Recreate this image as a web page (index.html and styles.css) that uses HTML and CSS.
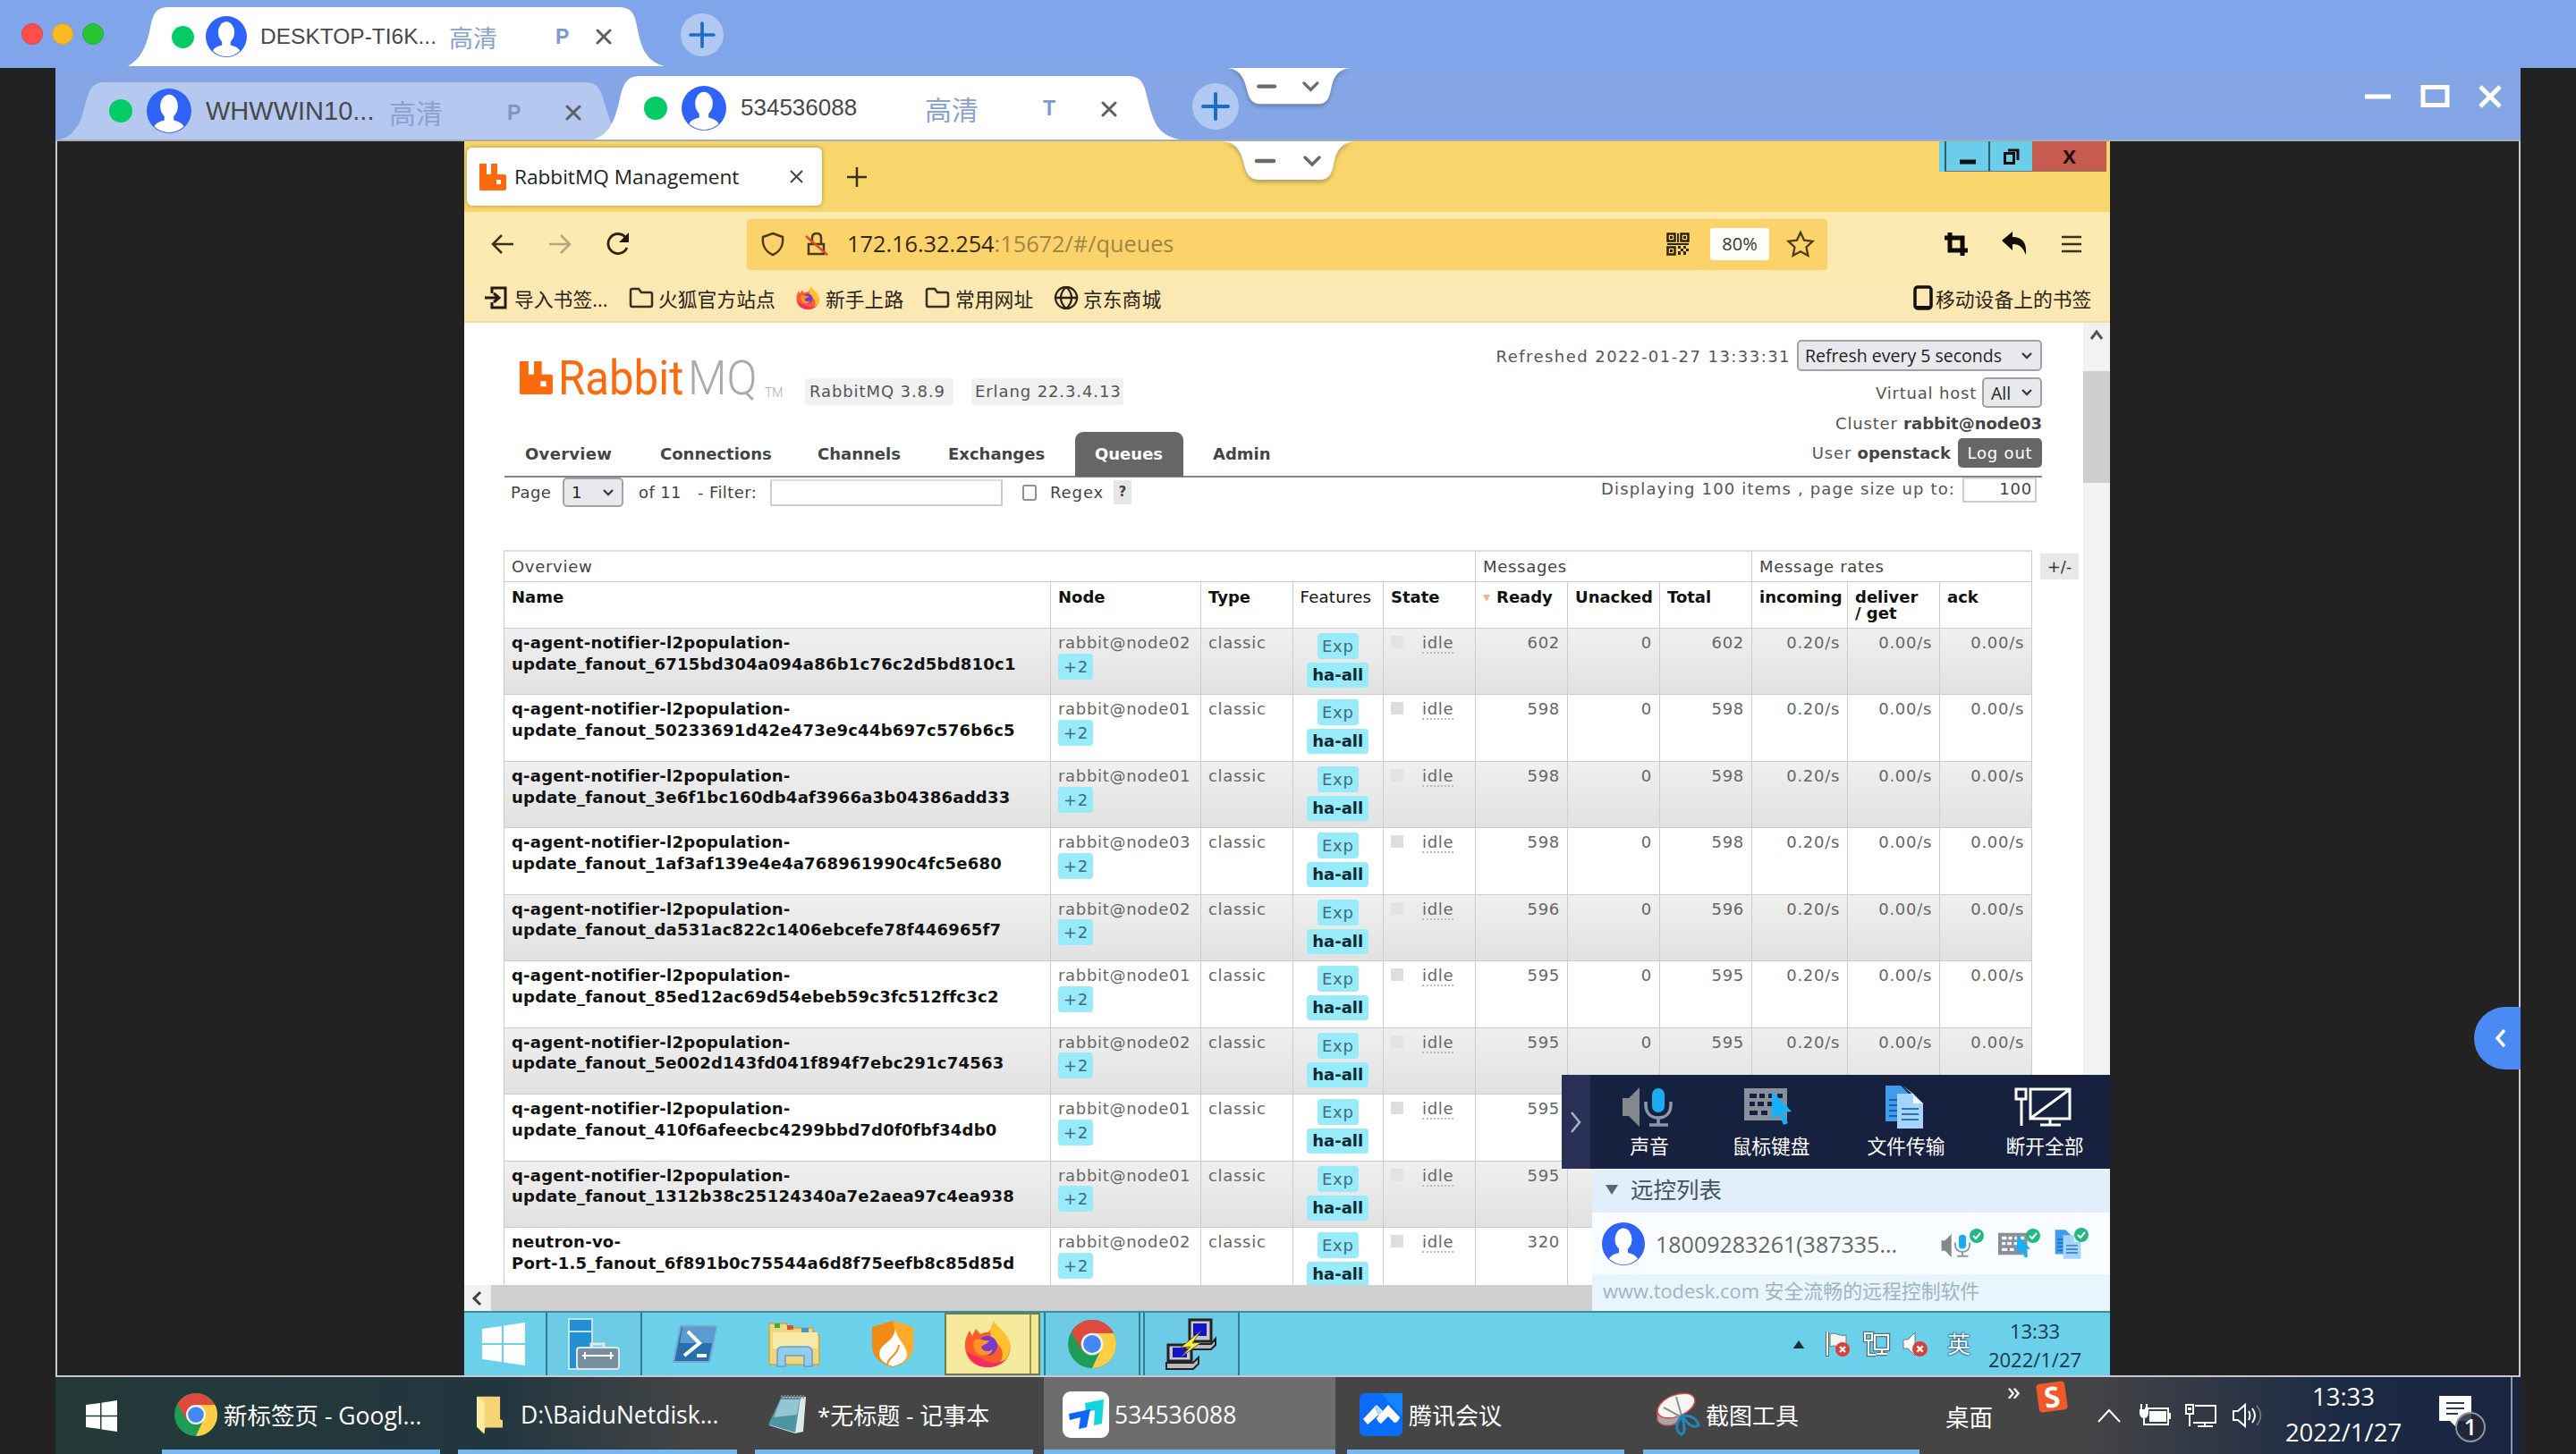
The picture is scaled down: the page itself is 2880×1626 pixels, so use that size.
FILE: index.html
```html
<!DOCTYPE html>
<html lang="zh-CN">
<head>
<meta charset="utf-8">
<title>ToDesk - RabbitMQ Management</title>
<link rel="stylesheet" href="styles.css">
</head>
<body>
<svg class="sprite" aria-hidden="true">
  <symbol id="avatar" viewBox="0 0 48 48"><circle cx="24" cy="24" r="24" fill="#2f62f6"/><ellipse cx="24" cy="19" rx="9.500" ry="12.500" fill="#fff"/><path d="M19 27h10v7c5 1 9 3 11 6.500A22.500 22.500 0 0 1 8 40.500c2-3.500 6-5.500 11-6.500z" fill="#fff"/></symbol>
  <symbol id="cross" viewBox="0 0 18 18"><path d="M2 2l14 14M16 2L2 16" stroke="#5b6068" stroke-width="3" stroke-linecap="round"/></symbol>
  <symbol id="plus" viewBox="0 0 52 52"><circle cx="26" cy="26" r="26" fill="#b1c8f2"/><path d="M12 26h28M26 12v28" stroke="#1a6dc6" stroke-width="4" stroke-linecap="round"/></symbol>
  <symbol id="notch" viewBox="0 0 146 48"><path d="M0 0C16 2 20 14 23 26C26 38 30 43 40 43H108C118 43 121 36 123 26C126 12 130 2 146 0z" fill="#fff"/><path d="M37 22h19" stroke="#6a6a6a" stroke-width="4.500" stroke-linecap="round"/><path d="M91 18l8 8 8-8" fill="none" stroke="#6a6a6a" stroke-width="3.500" stroke-linecap="round"/></symbol>
  <symbol id="rabbit" viewBox="0 0 30 30"><path d="M1 0h7v12h5V0h7v12h8q2 0 2 2v14q0 2-2 2H1q-1 0-1-2V1q0-1 1-1zM19 18v5h5v-5z" fill="#fb6a0c" fill-rule="evenodd"/></symbol>
  <symbol id="caret" viewBox="0 0 14 10"><path d="M2 2l5 5 5-5" fill="none" stroke="#3c3c3c" stroke-width="2.400"/></symbol>
  <symbol id="folder" viewBox="0 0 28 28"><path d="M2 22V6q0-2 2-2h7l3 4h10q2 0 2 2v12q0 2-2 2H4q-2 0-2-2z" fill="none" stroke="#35301f" stroke-width="2.500"/></symbol>
  <symbol id="firefox" viewBox="0 0 56 56"><path d="M28 54C12 54 2 43 3 28c0-6 3-11 5-15l3 6 4-8 5 6c4-2 7-2 9-2l6-9c6 4 4 6 9 10 7 5 11 12 9 20-2 11-12 18-25 18z" fill="#ff5a2c"/><path d="M35 2c4 8 16 13 18 25 2 13-7 22-14 25 6-6 8-14 3-21-4-7-11-8-11-16 0-5 2-9 4-13z" fill="#ffc12e"/><path d="M5 36c3 12 13 18 24 18 9 0 16-4 20-9-8 5-18 5-26 0C16 41 8 40 5 36z" fill="#f52c62"/><circle cx="28" cy="30" r="11" fill="#7a39c8"/><path d="M13 24c6-4 10 1 17 0-2 5-8 4-9 8 2 5 9 5 13 2-3 9-16 9-20 1-2-4-2-8-1-11z" fill="#ff9326"/></symbol>
  <symbol id="chrome" viewBox="0 0 48 48"><circle cx="24" cy="24" r="24" fill="#1f9d57"/><path d="M24 13H45.300A24 24 0 0 1 24 48L33 29z" fill="#ffcd46"/><path d="M3.200 12L14 30l10-17h21.300A24 24 0 0 0 3.200 12z" fill="#dd4b3e"/><circle cx="24" cy="24" r="11" fill="#f4f4f4"/><circle cx="24" cy="24" r="8.800" fill="#4688f1"/></symbol>
  <symbol id="windows" viewBox="0 0 48 48"><path d="M0 7l22-3v19H0zM24 3.600L48 0v23H24zM0 25h22v19L0 41zM24 25h24v23l-24-3.600z" fill="#fff"/></symbol>
  <symbol id="voice" viewBox="0 0 58 50"><path d="M1 15h7L20 3v44L8 35H1z" fill="#84888c"/><rect x="34" y="4" width="14" height="27" rx="7" fill="#1cabf0"/><path d="M27 19v3c0 9 5 15 14 15s14-6 14-15v-3M41 37v8M31 45h21" fill="none" stroke="#8b99a8" stroke-width="3.500"/></symbol>
  <symbol id="keys" viewBox="0 0 56 46"><path d="M0 2h48v36H0z" fill="#8a9099"/><path d="M6 8h8v5H6zm11 0h6v5h-6zm10 0h5v5h-5zm10 0h6v5h-6zM6 17h6v5H6zm9 0h7v5h-7zm11 0h6v5h-6zM6 27h9v5H6zm13 0h7v5h-7z" fill="var(--key,#16203f)"/><path d="M31 5l22 23-9 1 5 12-5 2-5-12-8 6z" fill="#16b1fb"/></symbol>
  <symbol id="files" viewBox="0 0 44 50"><path d="M1 1h17l9 9v31H1z" fill="#3e9bee"/><path d="M5 17h16M5 23h16M5 29h16M5 35h16" stroke="#195fa8" stroke-width="1.800"/><path d="M14 10h18l11 11v28H14z" fill="#a5d5fc"/><path d="M20 1l12 9v11h11z" fill="#fff" opacity=".9"/><path d="M19 27h19M19 33h19M19 39h19" stroke="#2574bd" stroke-width="2"/></symbol>
  <symbol id="ok" viewBox="0 0 16 16"><circle cx="8" cy="8" r="8" fill="#22b980"/><path d="M4 8l3 3 5-6" stroke="#fff" stroke-width="2" fill="none"/></symbol>
  <symbol id="error" viewBox="0 0 16 16"><circle cx="8" cy="8" r="8" fill="#d8403a"/><path d="M5 5l6 6M11 5l-6 6" stroke="#fff" stroke-width="2.200"/></symbol>
</svg>

<header class="topbar">
  <i class="light red"></i><i class="light yellow"></i><i class="light green"></i>
  <div class="tab tab-outer">
    <svg class="tab-shape" viewBox="0 0 600 66"><path d="M0 66C14 58 20 45 24 28C28 8 30 0 46 0H548C564 0 567 8 570 26C574 46 580 61 600 66z" fill="#fff"/></svg>
    <i class="dot"></i><svg class="av"><use href="#avatar"/></svg><span class="label">DESKTOP-TI6K...</span><span class="hd">高清</span><b class="mode">P</b><svg class="x"><use href="#cross"/></svg>
  </div>
  <svg class="add"><use href="#plus"/></svg>
</header>

<section class="session">
  <header class="subbar">
    <div class="tab tab-idle">
      <svg class="tab-shape" viewBox="0 0 640 64"><path d="M0 64C18 60 24 46 29 26C34 6 38 0 52 0H588C602 0 606 8 610 24C616 46 622 60 640 64z" fill="#b5c9f0"/></svg>
      <i class="dot"></i><svg class="av"><use href="#avatar"/></svg><span class="label">WHWWIN10...</span><span class="hd">高清</span><b class="mode">P</b><svg class="x"><use href="#cross"/></svg>
    </div>
    <div class="tab tab-live">
      <svg class="tab-shape" viewBox="0 0 656 71"><path d="M0 71C18 66 24 50 29 30C34 6 38 0 54 0H598C612 0 616 8 619 22C626 50 630 66 656 71z" fill="#fff"/></svg>
      <i class="dot"></i><svg class="av"><use href="#avatar"/></svg><span class="label">534536088</span><span class="hd">高清</span><b class="mode">T</b><svg class="x"><use href="#cross"/></svg>
    </div>
    <svg class="add"><use href="#plus"/></svg>
    <svg class="winctl" viewBox="0 0 156 28"><path d="M2 14h29M67 3.500h27v20H67zM131 3l22 22M153 3l-22 22" fill="none" stroke="#fff" stroke-width="5"/></svg>
  </header>

  <main class="desk">
    <div class="browser">
      <div class="strip">
        <div class="btab"><svg class="s30"><use href="#rabbit"/></svg><span>RabbitMQ Management</span><svg class="s15" viewBox="0 0 15 15"><path d="M1 1l13 13M14 1L1 14" stroke="#444" stroke-width="2"/></svg></div>
        <svg class="newtab" viewBox="0 0 22 22"><path d="M0 11h22M11 0v22" stroke="#3a2f12" stroke-width="2.500"/></svg>
        <div class="winbtns">
          <i><svg viewBox="0 0 18 20"><path d="M0 16h18" stroke="#111" stroke-width="5"/></svg></i>
          <i><svg viewBox="0 0 18 20"><path d="M1.500 6.500h10v11h-10zM5 3h11v11" fill="none" stroke="#111" stroke-width="3"/></svg></i>
          <b>X</b>
        </div>
      </div>
      <div class="nav">
        <svg class="s26" viewBox="0 0 26 26"><path d="M25 13H2M12 3L2 13l10 10" fill="none" stroke="#3a2f18" stroke-width="2.500"/></svg>
        <svg class="s26" viewBox="0 0 26 26"><path d="M1 13h23M14 3l10 10-10 10" fill="none" stroke="#b5a67c" stroke-width="2.500"/></svg>
        <svg class="s28" viewBox="0 0 28 28"><path d="M24 18A11 11 0 1 1 22 6" fill="none" stroke="#2d2413" stroke-width="2.800"/><path d="M26 1v11H15z" fill="#1c160b"/></svg>
        <div class="url">
          <svg class="s28" viewBox="0 0 28 28"><path d="M14 2l11 4c1 8-2 16-11 20C5 22 2 14 3 6z" fill="none" stroke="#4a3a16" stroke-width="2.500"/></svg>
          <svg class="s28" viewBox="0 0 28 28"><path d="M4 14h17v11H4zM8 14V7q0-5 5-5t5 5v7" fill="none" stroke="#4a3a16" stroke-width="2.500"/><path d="M1 5l24 21" stroke="#e0472f" stroke-width="2.500"/></svg>
          <span class="addr">172.16.32.254<em>:15672/#/queues</em></span>
          <svg class="s26" viewBox="0 0 26 26"><path d="M1.500 1.500h8v8h-8zM16.500 1.500h8v8h-8zM1.500 16.500h8v8h-8z" fill="none" stroke="#30250c" stroke-width="2.500"/><path d="M4 4h3v3H4zM19 4h3v3h-3zM4 19h3v3H4zM12 1h2v10h-2zM1 12h24v2H1zM13 15h3v3h-3zM19 15h3v3h-3zM16 18h3v3h-3zM22 18h3v3h-3zM13 21h3v4h-3zM19 21h3v4h-3z" fill="#30250c"/></svg>
          <span class="pct">80%</span>
          <svg class="s30" viewBox="0 0 30 30"><path d="M15 2l4 8.600 9.500 1.200-7 6.600 1.900 9.400L15 23.200 6.600 27.800l1.900-9.400-7-6.600L11 10.600z" fill="none" stroke="#4f3d12" stroke-width="2.300"/></svg>
        </div>
        <svg class="s26" viewBox="0 0 26 26"><path d="M6 0v20h20M0 6h20v20" fill="none" stroke="#0d0a05" stroke-width="5"/></svg>
        <svg class="s28" viewBox="0 0 28 28"><path d="M0 10L12 0v6c11 0 16 6 15 20C23 17 20 14 12 14v7z" fill="#120d06"/></svg>
        <svg class="s22" viewBox="0 0 22 22"><path d="M0 3h22M0 11h22M0 19h22" stroke="#3b331f" stroke-width="2.400"/></svg>
      </div>
      <div class="marks">
        <svg class="s28" viewBox="0 0 28 28"><path d="M8 9V3h15v22H8v-6M0 14h14M10 9l6 5-6 5" fill="none" stroke="#221d12" stroke-width="3"/></svg><span>导入书签...</span>
        <svg class="s28"><use href="#folder"/></svg><span>火狐官方站点</span>
        <svg class="s28"><use href="#firefox"/></svg><span>新手上路</span>
        <svg class="s28"><use href="#folder"/></svg><span>常用网址</span>
        <svg class="s28" viewBox="0 0 28 28"><path d="M14 2a12 12 0 1 0 .1 0zM14 2c-8 7-8 17 0 24 8-7 8-17 0-24zM2 14h24" fill="none" stroke="#2a2416" stroke-width="2.300"/></svg><span>京东商城</span>
        <svg class="phone" viewBox="0 0 22 28"><rect x="2" y="2" width="18" height="24" rx="3" fill="none" stroke="#111" stroke-width="3.500"/><path d="M3 25h16" stroke="#111" stroke-width="4"/></svg><span>移动设备上的书签</span>
      </div>

      <div class="page">
        <div class="content">
          <div class="mq-head">
            <div class="mq-left">
              <div class="brand"><svg class="brand-logo"><use href="#rabbit"/></svg><span class="brand-a">Rabbit</span><span class="brand-b">MQ</span><span class="tm">TM</span><span class="ver">RabbitMQ 3.8.9</span><span class="ver v2">Erlang 22.3.4.13</span></div>
              <nav class="menu"><a>Overview</a><a>Connections</a><a>Channels</a><a>Exchanges</a><a class="on">Queues</a><a>Admin</a></nav>
            </div>
            <div class="mq-info">
              <div class="r1"><span class="wide">Refreshed 2022-01-27 13:33:31</span><span class="select sel-refresh">Refresh every 5 seconds<svg><use href="#caret"/></svg></span></div>
              <div class="r2"><span class="key">Virtual host</span><span class="select sel-all">All<svg><use href="#caret"/></svg></span></div>
              <div class="r3"><span class="key">Cluster&nbsp;</span><b>rabbit@node03</b></div>
              <div class="r4"><span class="key">User&nbsp;</span><b>openstack</b><span class="logout">Log out</span></div>
            </div>
          </div>
          <div class="filter">
            <span>Page</span><span class="select sel-page">1<svg><use href="#caret"/></svg></span><span>of 11</span><span>- Filter:</span><i class="field"></i><i class="check"></i><span class="regex">Regex</span><span class="help">?</span><span class="showing">Displaying 100 items , page size up to:</span><span class="field num">100</span>
          </div>
          <div class="tablewrap">
            <table>
              <colgroup><col class="c-name"><col class="c-node"><col class="c-type"><col class="c-feat"><col class="c-state"><col class="c-n"><col class="c-n"><col class="c-n"><col class="c-in"><col class="c-n"><col class="c-n"></colgroup>
              <thead>
                <tr class="groups"><th colspan="5">Overview</th><th colspan="3">Messages</th><th colspan="3">Message rates</th></tr>
                <tr class="cols"><th>Name</th><th>Node</th><th>Type</th><th class="plain">Features</th><th>State</th><th class="sorted"><i></i>Ready</th><th>Unacked</th><th>Total</th><th>incoming</th><th>deliver<br>/ get</th><th>ack</th></tr>
              </thead>
              <tbody id="queues"></tbody>
            </table>
            <span class="plusminus">+/-</span>
          </div>
        </div>
        <div class="vscroll"><svg viewBox="0 0 16 16"><path d="M2 12l6-8 6 8" fill="none" stroke="#555" stroke-width="3"/></svg><i></i></div>
      </div>
      <div class="hscroll"><span><svg viewBox="0 0 12 20"><path d="M10 3L3 10l7 7" fill="none" stroke="#444" stroke-width="3"/></svg></span></div>

      <div class="rtask">
        <span class="app a-start"><svg class="s48"><use href="#windows"/></svg></span>
        <span class="app boxed a-srv"><svg viewBox="0 0 58 58"><path d="M1 1h26v56H1z" fill="#2490d4" stroke="#bfe4f5" stroke-width="2"/><path d="M1 15h26" stroke="#bfe4f5" stroke-width="2"/><path d="M26 34v-5h14v5" fill="none" stroke="#dfe7ea" stroke-width="3"/><rect x="10" y="33" width="47" height="24" rx="3" fill="#75909c" stroke="#dfe7ea" stroke-width="2"/><path d="M16 42h35M19 38v8M48 38v8" stroke="#fff" stroke-width="2"/></svg></span>
        <span class="app a-ps"><svg viewBox="0 0 52 44"><path d="M10 2h40L42 42H2z" fill="#286fae" stroke="#78a8ce" stroke-width="2"/><path d="M12 3h37l-4 18H9z" fill="#5a9ccd"/><path d="M18 8l13 13-17 14M28 35h11" fill="none" stroke="#fff" stroke-width="4"/></svg></span>
        <span class="app a-exp"><svg viewBox="0 0 60 54"><path d="M2 50V4h19l4 5h26v8h7v33z" fill="#efd77e" stroke="#c9a64b" stroke-width="1.500"/><path d="M6 14h50v18H6z" fill="#f8eaa8"/><path d="M8 4h6v5H8z" fill="#3daa4a"/><path d="M22 6h7v5h-7z" fill="#d8502e"/><path d="M38 9h8v5h-8z" fill="#3b97d8"/><path d="M11 52V36q0-6 6-6h27q6 0 6 6v16h-9V40H20v12z" fill="#94cce9" stroke="#5da3cc" stroke-width="1.500"/></svg></span>
        <span class="app a-sh"><svg viewBox="0 0 48 54"><path d="M24 1l23 7v21c0 12-9 20-23 24C10 49 1 41 1 29V8z" fill="#f28b16"/><path d="M24 1l23 7v21c0 9-5 16-13 20z" fill="#ffab28"/><path d="M27 10c2 13 13 18 13 29 0 6-7 11-16 13C12 48 7 42 10 34c3-8 15-10 17-24z" fill="#fff"/><path d="M18 50c1-9 12-10 13-22" stroke="#f28b16" stroke-width="2" fill="none"/></svg></span>
        <span class="app a-ff"><svg><use href="#firefox"/></svg></span>
        <span class="app boxed a-ch"><svg><use href="#chrome"/></svg></span>
        <span class="app boxed a-pt"><svg viewBox="0 0 58 58"><path d="M27 2h24v24H27zM3 30h26v18H3z" fill="#c9c9c9" stroke="#222" stroke-width="3"/><path d="M31 6h15v14H31zM8 33h16v11H8z" fill="#1515c8"/><path d="M22 29h29l5-6v7l-5 5H22zM1 50h30l6-6v7l-6 6H1z" fill="#b9b9b9" stroke="#222" stroke-width="2"/><path d="M40 14L17 33l11-1-11 12 23-17-10 1z" fill="#fff12e" stroke="#555" stroke-width="1"/></svg></span>
        <div class="rtray">
          <svg class="up" viewBox="0 0 14 10"><path d="M0 10L7 0l7 10z" fill="#16323a"/></svg>
          <svg class="t30" viewBox="0 0 30 30"><path d="M4 1v28" stroke="#666" stroke-width="4"/><path d="M4 1v27" stroke="#fff" stroke-width="2"/><path d="M7 4c6-3 10 3 18 1v13c-8 2-12-3-18 0z" fill="#f4f4f4" stroke="#777"/><use href="#error" x="13" y="13" width="16" height="16"/></svg>
          <svg class="t30" viewBox="0 0 30 30"><path d="M13 5h15v16H13zM15 26h12M21 21v5M2 3h8v8H2zM6 11v16h8" fill="none" stroke="#4b7883" stroke-width="4.500"/><path d="M13 5h15v16H13zM15 26h12M21 21v5M2 3h8v8H2zM6 11v16h8" fill="none" stroke="#fff" stroke-width="2"/></svg>
          <svg class="t30" viewBox="0 0 30 30"><path d="M2 10h5l8-8v26l-8-8H2z" fill="#fff" stroke="#777"/><use href="#error" x="12" y="12" width="17" height="17"/></svg>
          <span class="ime">英</span>
          <div class="rclock"><span>13:33</span><span>2022/1/27</span></div>
        </div>
      </div>

      <aside class="todesk">
        <div class="td-bar">
          <span class="td-fold"><svg viewBox="0 0 14 26"><path d="M2 2l9 11-9 11" fill="none" stroke="#a9b2cc" stroke-width="2.500"/></svg></span>
          <div class="td-item i1"><svg><use href="#voice"/></svg><span>声音</span></div>
          <div class="td-item i2"><svg><use href="#keys"/></svg><span>鼠标键盘</span></div>
          <div class="td-item i3"><svg><use href="#files"/></svg><span>文件传输</span></div>
          <div class="td-item i4"><svg viewBox="0 0 64 46"><path d="M2 3h11v11H2zM8 14v30M18 3h44v33H18zM19 35L61 4M40 36v7M29 43h23" fill="none" stroke="#fff" stroke-width="3"/></svg><span>断开全部</span></div>
        </div>
        <div class="td-list">
          <div class="td-title"><i></i>远控列表</div>
          <div class="td-row"><svg class="s48"><use href="#avatar"/></svg><span>18009283261(387335...</span>
            <svg class="st" viewBox="0 0 48 36"><use href="#voice" y="4" width="34" height="32"/><use href="#ok" x="32" y="1" width="16" height="16"/></svg>
            <svg class="st lightkeys" viewBox="0 0 48 36"><use href="#keys" y="4" width="38" height="32"/><use href="#ok" x="31" y="1" width="16" height="16"/></svg>
            <svg class="st" viewBox="0 0 48 36"><use href="#files" y="1" width="30" height="35"/><use href="#ok" x="22" y="0" width="16" height="16"/></svg>
          </div>
          <div class="td-foot">www.todesk.com 安全流畅的远程控制软件</div>
        </div>
      </aside>
    </div>
  </main>

  <footer class="taskbar">
    <span class="t-win"><svg><use href="#windows"/></svg></span>
    <div class="task k1"><svg class="s48"><use href="#chrome"/></svg><span>新标签页 - Googl...</span></div>
    <div class="task k2"><svg class="fold" viewBox="0 0 30 44"><path d="M0 1h27v26l3 2v8H10L8 44 0 36z" fill="#f6d374"/><path d="M0 1l9 6v37l-9-8z" fill="#fde9a4"/></svg><span>D:\BaiduNetdisk...</span></div>
    <div class="task k3"><svg class="note" viewBox="0 0 46 46"><path d="M16 3h27l-3 39-9 2-29-9z" fill="#dbe9ea"/><path d="M15 4h22L31 43 1 34z" fill="#4f94a3"/><path d="M15 6h21l-3 17L7 26z" fill="#93c6cf"/><path d="M15 3h26" stroke="#7b7f80" stroke-width="4" stroke-dasharray="2 1.500"/></svg><span>*无标题 - 记事本</span></div>
    <div class="task k4 active"><svg class="td" viewBox="0 0 52 52"><rect width="52" height="52" rx="9" fill="#fff"/><path d="M25 13l21-4-2 27-9 2 1-17-10 2z" fill="#12d4dc"/><path d="M7 25l24-5-4 20-9 2 2-13-12 3z" fill="#0c66fb"/></svg><span>534536088</span></div>
    <div class="task k5"><svg class="s48" viewBox="0 0 48 48"><rect width="48" height="48" rx="6" fill="#0a6cfb"/><path d="M48 0v26L24 0z" fill="#1285ff"/><path d="M19 13l7 7-17 15-5-6z" fill="#fff"/><path d="M16 15l3-1 10 12-5 5z" fill="#b9d2fb"/><path d="M32 13l13 14q-2 6-6 6l-7-7-8 8q-4-2-5-6z" fill="#fff"/></svg><span>腾讯会议</span></div>
    <div class="task k6"><svg class="s48" viewBox="0 0 48 48"><path d="M1 20v10c4 8 18 8 25 0V16z" fill="#a7a7a7" stroke="#cf5555" stroke-width="1.500"/><ellipse cx="22" cy="14" rx="22" ry="12" transform="rotate(-22 22 14)" fill="#f7f4f4" stroke="#d64a4a" stroke-width="1.500"/><path d="M22 4l6 21M8 16l22 12" stroke="#8d9492" stroke-width="2"/><path d="M28 26c-8 8-6 18 0 20 5-2 3-12 0-20zM29 26c8-3 17 3 18 10-7 4-13-3-18-10z" fill="none" stroke="#1f86c4" stroke-width="3"/></svg><span>截图工具</span></div>
    <div class="tray">
      <span class="desktop">桌面</span>
      <span class="more">»</span>
      <span class="sogou">S</span>
      <svg class="tr1" viewBox="0 0 28 18"><path d="M2 16L14 3l12 13" fill="none" stroke="#fff" stroke-width="2"/></svg>
      <svg class="tr2" viewBox="0 0 36 26"><path d="M7 5h26v18H7" fill="none" stroke="#fff" stroke-width="2"/><path d="M12 8h19v12H12zM34 10h2v7h-2zM1 6h10v5q-1 5-5 5t-5-5zM2 0h2v6H2zM8 0h2v6H8zM5 15h2v9H5z" fill="#fff"/></svg>
      <svg class="tr3" viewBox="0 0 36 28"><path d="M11 3h23v19H9M14 26h17M22 22v4M1 2h8v10H1zM5 12v14" fill="none" stroke="#fff" stroke-width="2"/><path d="M3 5h4v3H3z" fill="#fff"/></svg>
      <svg class="tr4" viewBox="0 0 34 28"><path d="M1 9h5l8-7v24l-8-7H1z" fill="none" stroke="#fff" stroke-width="2"/><path d="M18 9q3 5 0 10M22 6q6 8 0 16" fill="none" stroke="#fff" stroke-width="2"/><path d="M27 3q9 11 0 22" fill="none" stroke="#777f8c" stroke-width="1.500"/></svg>
      <div class="clock"><span>13:33</span><span>2022/1/27</span></div>
      <span class="notice"><svg viewBox="0 0 36 36"><path d="M0 0h36v28H20v8l-8-8H0z" fill="#fff"/><path d="M8 8h20M8 14h20M8 20h13" stroke="#333b4a" stroke-width="2"/></svg><b>1</b></span>
      <i class="peek"></i>
    </div>
  </footer>
  <svg class="notch n1"><use href="#notch"/></svg>
  <svg class="notch n2"><use href="#notch"/></svg>
  <span class="pull"><svg viewBox="0 0 14 24"><path d="M11 3L3 12l8 9" fill="none" stroke="#fff" stroke-width="3.500"/></svg></span>
</section>
<script src="app.js"></script>
</body>
</html>
```
FILE: styles.css
```css
* { box-sizing: border-box; }
body { margin: 0; width: 2880px; height: 1626px; overflow: hidden; background: #222; font-family: "Liberation Sans", "Noto Sans CJK SC", sans-serif; }
svg { display: block; overflow: visible; }
.sprite { position: absolute; width: 0; height: 0; }
.s15 { width: 15px; height: 15px; } .s22 { width: 22px; height: 22px; } .s26 { width: 26px; height: 26px; }
.s28 { width: 28px; height: 28px; } .s30 { width: 30px; height: 30px; } .s48 { width: 48px; height: 48px; }

/* outer tab bar */
.topbar { height: 76px; background: #81a5ea; display: flex; align-items: center; padding-left: 24px; }
.light { width: 24px; height: 24px; border-radius: 50%; margin-right: 10px; }
.red { background: #ff4d47; border: 1px solid #e2403a; } .yellow { background: #fbb923; border: 1px solid #e0a31c; } .green { background: #26c634; border: 1px solid #1fae2c; }
.tab { position: relative; display: grid; align-items: center; white-space: nowrap; }
.tab > * { position: relative; }
.tab > .tab-shape { position: absolute; inset: 0; width: 100%; height: 100%; }
.dot { width: 25px; height: 25px; border-radius: 50%; background: #03cb66; }
.label { color: #484848; }
.hd { color: #8aa2cf; }
.mode { color: #7f9ad0; font-size: 23px; }
.x { width: 18px; height: 18px; }
.tab-outer { width: 600px; height: 66px; margin: 6px 0 0 17px; padding-left: 49px; grid-template-columns: 38px 61px 211px 119px 45px 1fr; }
.tab-outer .av { width: 46px; height: 46px; } .tab-outer .label { font-size: 24.500px; } .tab-outer .hd { font-size: 27px; }
.topbar .add { width: 48px; height: 48px; margin: 2px 0 0 18px; }

.session { position: relative; width: 2756px; margin-left: 62px; }
.subbar { height: 82px; background: #84a6e6; border-bottom: 2px solid #a9adb5; display: flex; align-items: flex-end; overflow: hidden; }
.tab-idle { width: 640px; height: 64px; margin-left: 4px; padding-left: 56px; grid-template-columns: 42px 66px 205px 132px 65px 1fr; }
.tab-idle .label { font-size: 29px; } .tab-idle .mode { padding-top: 4px; color: #7c94c8; } .tab-idle .hd { padding-top: 2px; } .tab-idle .x { margin-top: 3px; }
.tab-live { width: 656px; height: 71px; margin-left: -43px; padding-left: 57px; grid-template-columns: 42px 66px 206px 132px 65px 1fr; }
.tab-live .label { font-size: 26px; } .tab-live .x, .tab-live .mode { margin-top: 2px; }
.subbar .av { width: 50px; height: 50px; } .subbar .hd { font-size: 30px; } .subbar .dot { width: 26px; height: 26px; }
.subbar .add { width: 52px; height: 52px; margin: 0 0 11px 14px; }
.winctl { width: 156px; height: 28px; }
.subbar .winctl { margin: 0 20px 34px auto; }

.desk { height: 1382px; border: 2px solid #c8cad2; border-top: 0; padding-left: 455px; background: #222; }
.browser { position: relative; width: 1840px; height: 1380px; background: #fff; overflow: hidden; font-family: "Open Sans", "Noto Sans CJK SC", sans-serif; }
.strip { height: 79px; background: #f9d66b; display: flex; align-items: center; padding-left: 3px; }
.btab { width: 397px; height: 65px; background: #fff; border-radius: 6px; box-shadow: 0 0 5px #b08d3a; display: grid; grid-template-columns: 39px 308px 1fr; padding-left: 14px; align-items: center; font-size: 22.600px; color: #222; white-space: nowrap; }
.newtab { width: 22px; height: 22px; margin-left: 28px; }
.winbtns { margin-left: auto; align-self: flex-start; height: 34px; display: flex; margin-right: 4px; background: #6ccdea; padding-left: 6px; }
.winbtns i { width: 49px; border-left: 2px solid #29616e; border-bottom: 1px solid #777; display: flex; justify-content: center; align-items: center; }
.winbtns svg { width: 18px; height: 20px; }
.winbtns b { width: 83px; background: #c75b50; border-bottom: 1px solid #777; text-align: center; font: bold 22px/33px "Open Sans", sans-serif; color: #1a0d0b; }
.nav { height: 72px; background: #fdeab1; display: grid; align-items: center; padding-left: 30px; grid-template-columns: 64px 64px 158px 1339px 64px 67px 1fr; }
.url { width: 1208px; height: 57px; border-radius: 4px; background: #fcd36b; display: grid; align-items: center; padding-left: 15px; grid-template-columns: 50px 47px 916px 49px 86px 1fr; }
.addr { font-size: 25.300px; color: #33270c; padding-bottom: 2px; } .addr em { font-style: normal; color: #a08545; }
.pct { width: 66px; height: 36px; background: #fffdf8; border-radius: 3px; text-align: center; font-size: 20px; line-height: 36px; color: #333; }
.marks { height: 52px; background: #fce8b2; border-bottom: 2px solid #f0dfa6; display: grid; align-items: center; padding: 0 0 2px 23px; grid-template-columns: 33px 128px 33px 153px 34px 111px 34px 110px 33px 928px 25px 1fr; white-space: nowrap; font-size: 21.800px; color: #2a2418; }
.phone { width: 22px; height: 28px; }

/* management page */
.page { height: 1076px; display: flex; overflow: hidden; font-family: "DejaVu Sans", sans-serif; font-size: 18px; color: #555; }
.content { width: 1810px; padding-left: 45px; background: #fff; white-space: nowrap; }
.vscroll { width: 30px; background: #f2f2f2; padding-top: 6px; }
.vscroll svg { width: 16px; height: 16px; margin: 0 auto 32px; }
.vscroll i { display: block; height: 125px; background: #cecece; }
.hscroll { height: 29px; background: #cfcfcf; }
.hscroll span { display: flex; width: 30px; height: 29px; background: #f2f2f2; align-items: center; justify-content: center; padding-right: 3px; }
.hscroll svg { width: 12px; height: 20px; }
.mq-head { width: 1719px; height: 173px; border-bottom: 2px solid #858585; display: flex; justify-content: space-between; }
.brand { height: 122px; padding: 41px 0 0 17px; display: grid; grid-template-columns: 43px 145px 86px 45px 186px 170px; align-items: start; }
.brand-logo { width: 37px; height: 41px; }
.brand span { font-family: Roboto, sans-serif; font-weight: 300; line-height: 1; }
.brand .brand-a, .brand .brand-b { font-size: 54px; margin-top: -6px; color: #fb6a0c; transform: scaleX(.93); transform-origin: 0 0; }
.brand .brand-a { font-weight: 400; transform: scaleX(.91); }
.brand .brand-b { color: #aaa; }
.brand .tm { font-size: 14px; margin-top: 30px; color: #aaa; }
.brand .ver { font: 18px/30px "DejaVu Sans", sans-serif; letter-spacing: .9px; width: 166px; height: 30px; margin-top: 21px; padding-left: 5px; background: #f1f1f1; border-radius: 3px; }
.brand .v2 { width: 170px; padding-left: 4px; }
.menu { height: 49px; display: grid; grid-template-columns: 151px 176px 146px 142px 154px 100px; padding-left: 23px; align-items: stretch; font-weight: bold; line-height: 50px; color: #444; }
.menu a:first-child { letter-spacing: .3px; }
.menu .on { width: 121px; padding-left: 22px; background: #666; color: #fff; border-radius: 9px 9px 0 0; }
.mq-info { padding-top: 19px; width: 640px; }
.mq-info div { display: flex; justify-content: flex-end; align-items: center; }
.mq-info b { color: #444; }
.r1 { height: 35px; margin-bottom: 7px; } .r2 { height: 34px; } .r3 { height: 34px; } .r4 { height: 33px; }
.wide { letter-spacing: 1.450px; padding-top: 2px; }
.key { letter-spacing: .8px; }
.select { display: flex; align-items: center; justify-content: space-between; border: 2px solid #a2a2a6; border-radius: 5px; background: #e9e9ed; padding: 0 8px; color: #222; }
.select svg { width: 14px; height: 10px; }
.sel-refresh { width: 274px; height: 35px; margin-left: 7px; padding-left: 7px; font: 19.500px "Open Sans", sans-serif; }
.sel-all { width: 67px; height: 34px; margin-left: 6px; font: 19.500px "Open Sans", sans-serif; }
.logout { width: 94px; height: 33px; margin-left: 8px; border-radius: 5px; background: #666; color: #fff; line-height: 33px; text-align: center; letter-spacing: .8px; }
.filter { height: 81px; padding-left: 7px; display: grid; align-items: center; grid-template-rows: 33px; grid-template-columns: 58px 85px 66px 81px 282px 31px 71px 545px 404px 83px; color: #444; }
.filter > span { letter-spacing: .4px; }
.filter > .regex { letter-spacing: .9px; }
.filter > .showing { letter-spacing: 1.150px; padding-bottom: 9px; color: #555; }
.sel-page { width: 68px; height: 33px; }
.field { display: block; width: 260px; height: 30px; border: 2px solid #ccc; border-top-color: #ddd; background: #fff; }
.filter > .num { width: 83px; height: 28px; text-align: right; line-height: 22px; padding-right: 3px; margin-bottom: 5px; letter-spacing: .8px; }
.check { width: 16px; height: 18px; border: 2px solid #8f8f9d; border-radius: 3px; }
.help { width: 20px; background: #e6e6e6; text-align: center; font-weight: bold; font-size: 15px; line-height: 27px; }
.tablewrap { display: flex; align-items: flex-start; }
table { width: 1709px; flex: none; table-layout: fixed; border-collapse: collapse; border-top: 2px solid #ddd; margin-left: -1px; }
.c-name { width: 611px; } .c-node { width: 168px; } .c-type { width: 102.500px; } .c-feat { width: 101.500px; } .c-state { width: 103px; } .c-n { width: 103px; } .c-in { width: 107px; }
th, td { border: 1px solid #ccc; padding: 0 8px; vertical-align: top; text-align: left; }
.groups th { height: 33px; line-height: 33px; font-weight: normal; color: #444; letter-spacing: .7px; }
.cols th { height: 52px; padding-top: 8px; line-height: 18px; color: #111; letter-spacing: 0; }
.cols .plain { font-weight: normal; letter-spacing: .3px; }
.sorted i { display: inline-block; margin-right: 7px; border: 4px solid transparent; border-top: 8px solid #f4b493; border-bottom: 0; vertical-align: 1px; }
tbody tr { height: 74.450px; }
tbody tr:nth-child(odd) { background: linear-gradient(#f0f0f0, #e1e1e1); }
td { line-height: 23.700px; padding-top: 4px; letter-spacing: .7px; color: #666; }
td.name { font-weight: bold; color: #111; letter-spacing: .24px; }
td.n { text-align: right; }
td.features { text-align: center; padding: 4px 0 0; }
.tag { display: block; width: 39px; height: 29px; line-height: 29px; padding-left: 6px; border-radius: 4px; background: #98ebfa; color: #456a78; }
.exp { width: 46px; margin: 1px auto 4px; padding: 0; }
.ha { width: 69px; height: 28px; line-height: 27px; margin: 0 auto; padding: 0; font-weight: bold; color: #0e2930; letter-spacing: 0; }
.state i { display: inline-block; width: 14px; height: 14px; background: #dedede; margin-right: 21px; }
tbody tr:nth-child(odd) .state i { background: #e3e3e3; }
.state span { display: inline-block; line-height: 21px; border-bottom: 2px dotted #bbb; }
.plusminus { width: 43px; height: 29px; margin: 4px 0 0 9px; background: #e8e8e8; text-align: center; line-height: 29px; color: #333; }

/* remote taskbar */
.rtask { height: 74px; background: #6bd0e9; border-top: 2px solid #3b8ba0; border-bottom: 2px solid #4b9cb2; display: flex; }
.app { display: flex; align-items: center; justify-content: center; flex: none; }
.boxed { border-left: 2px solid #327b8d; border-right: 2px solid #327b8d; background: #6ecbe5; }
.a-start { width: 91px; padding-right: 3px; } .a-srv { width: 108px; } .a-ps { width: 118px; } .a-exp { width: 104px; } .a-sh { width: 116px; } .a-ff { width: 107px; background: linear-gradient(90deg, #f6ea9d 90%, #9c9860 90%, #9c9860 92%, #f3e68c 92%); border: 2px solid #6c7d4a; padding-right: 12px; } .a-ch { width: 108px; margin-left: 4px; } .a-pt { width: 108px; margin-left: 3px; }
.a-srv svg, .a-pt svg { width: 58px; height: 58px; } .a-ps svg { width: 52px; height: 44px; } .a-exp svg { width: 60px; height: 54px; } .a-sh svg { width: 48px; height: 54px; } .a-ff svg { width: 56px; height: 56px; } .a-ch svg { width: 54px; height: 54px; }
.rtray { flex: 1; display: grid; padding-left: 618px; grid-template-columns: 35px 44px 43px 51px 42px 112px; align-items: center; }
.up { width: 14px; height: 9px; } .t30 { width: 30px; height: 30px; }
.ime { font-size: 26px; color: #f7fdff; text-shadow: 0 0 2px #124, 0 0 2px #124; line-height: 1; }
.rclock { display: flex; flex-direction: column; align-items: center; color: #16384a; font-size: 22px; line-height: 32px; padding-top: 1px; }

/* remote control panel */
.todesk { position: absolute; left: 1227px; top: 1044px; width: 613px; color: #fff; }
.td-bar { height: 105px; background: #16203f; display: flex; }
.td-fold { width: 32px; background: #283055; display: flex; align-items: center; justify-content: center; } .td-fold svg { width: 14px; height: 26px; }
.td-item { width: 124px; padding-top: 11px; display: flex; flex-direction: column; align-items: center; gap: 3px; font-size: 21.800px; line-height: 32px; white-space: nowrap; }
.td-item svg { width: 58px; height: 50px; margin-right: 4px; } .i2 svg { width: 56px; } .i3 svg { width: 44px; } .i4 svg { width: 64px; }
.i1 { margin-left: 4px; } .i2 { margin-left: 12px; } .i3 { margin-left: 27px; } .i4 { margin-left: 31px; }
.td-list { margin-left: 34px; }
.td-title { height: 49px; background: #e2eef9; color: #42545e; font-size: 25.500px; line-height: 47px; padding: 0 0 3px 15px; display: flex; align-items: center; }
.td-title i { border: 7px solid transparent; border-top: 11px solid #4b6b76; border-bottom: 0; margin-right: 14px; }
.td-row { height: 69px; background: #f9fdff; display: grid; align-items: center; padding-left: 11px; grid-template-columns: 60px 319px 64px 63px 1fr; font-size: 25px; color: #666; white-space: nowrap; }
.st { width: 48px; height: 36px; } .lightkeys { --key: #f4f9fc; }
.td-foot { height: 41px; background: #e8f5fe; color: #a0b4c1; font-size: 21.900px; line-height: 37px; padding-left: 12px; white-space: nowrap; }

/* local taskbar */
.taskbar { height: 86px; display: flex; color: #fff; font: 26.500px "Open Sans", "Noto Sans CJK SC", sans-serif; background: linear-gradient(90deg, #243a38 0, #22363f 500px, #454545 720px, #454545 2260px, #1b2a45 2560px, #1a2540 100%); }
.t-win { width: 119px; display: flex; align-items: center; padding-left: 34px; } .t-win svg { width: 35px; height: 35px; }
.task { flex: none; height: 86px; border-bottom: 5px solid #76b8ee; display: flex; align-items: center; padding-top: 2px; white-space: nowrap; }
.k1 { width: 311px; padding-left: 14px; } .k2 { width: 312px; margin-left: 20px; padding-left: 21px; } .k3 { width: 311px; margin-left: 20px; padding-left: 14px; } .k4 { width: 326px; margin-left: 12px; padding-left: 21px; } .k5 { width: 310px; margin-left: 13px; padding-left: 14px; } .k6 { width: 309px; margin-left: 21px; padding-left: 15px; }
.k3, .k5, .k6 { font-size: 26px; }
.active { background: #6d6d6d; }
.task span { margin-left: 7px; } .task.k2 span { margin-left: 20px; } .task.k3 span { margin-left: 10px; } .task.k4 span { margin-left: 6px; }
.fold { width: 29px; height: 44px; } .note { width: 46px; height: 46px; } .td { width: 52px; height: 52px; }
.tray { flex: 1; display: grid; align-items: center; padding-left: 29px; grid-template-columns: 69px 34px 66px 47px 52px 53px 49px 150px 95px 1fr; white-space: nowrap; }
.more { align-self: start; font-size: 30px; line-height: 30px; }
.sogou { align-self: start; width: 32px; height: 32px; margin-top: 6px; background: #f0592a; border-radius: 4px; transform: rotate(-8deg); font: bold 32px/32px "Open Sans", sans-serif; text-align: center; }
.tr1 { width: 28px; height: 18px; } .tr2 { width: 36px; height: 26px; } .tr3 { width: 36px; height: 28px; } .tr4 { width: 34px; height: 28px; }
.clock { display: flex; flex-direction: column; align-items: center; line-height: 40px; width: 150px; font-size: 27.500px; padding-bottom: 2px; }
.notice { position: relative; padding-left: 32px; } .notice svg { width: 36px; height: 36px; margin-top: -8px; }
.notice b { position: absolute; left: 50px; top: 10px; width: 34px; height: 34px; border: 2px solid #8d94a0; border-radius: 50%; background: rgba(34,40,54,.85); font: 600 25px/29px "Open Sans", sans-serif; text-align: center; }
.peek { width: 2px; height: 86px; background: #8a93a3; margin-left: 17px; }

/* floating handles */
.notch { position: absolute; filter: drop-shadow(0 3px 2px rgba(60,60,60,.35)); }
.n1 { left: 1309px; top: 0; width: 140px; height: 45px; }
.n2 { left: 1306px; top: 82px; width: 146px; height: 48px; }
.pull { position: absolute; right: 0; top: 1050px; width: 52px; height: 70px; border-radius: 35px 0 0 35px; background: #4a8af5; display: flex; align-items: center; padding-left: 23px; } .pull svg { width: 14px; height: 24px; }
```
FILE: app.js
```javascript
// Rows whose message columns lie behind the control panel only list the ready count.
const prefix = "q-agent-notifier-l2population-";
const queues = [
  [prefix, "update_fanout_6715bd304a094a86b1c76c2d5bd810c1", "02", 602],
  [prefix, "update_fanout_50233691d42e473e9c44b697c576b6c5", "01", 598],
  [prefix, "update_fanout_3e6f1bc160db4af3966a3b04386add33", "01", 598],
  [prefix, "update_fanout_1af3af139e4e4a768961990c4fc5e680", "03", 598],
  [prefix, "update_fanout_da531ac822c1406ebcefe78f446965f7", "02", 596],
  [prefix, "update_fanout_85ed12ac69d54ebeb59c3fc512ffc3c2", "01", 595],
  [prefix, "update_fanout_5e002d143fd041f894f7ebc291c74563", "02", 595],
  [prefix, "update_fanout_410f6afeecbc4299bbd7d0f0fbf34db0", "01", 595, true],
  [prefix, "update_fanout_1312b38c25124340a7e2aea97c4ea938", "01", 595, true],
  ["neutron-vo-", "Port-1.5_fanout_6f891b0c75544a6d8f75eefb8c85d85d", "02", 320, true],
];
document.getElementById("queues").innerHTML = queues.map(([a, b, node, ready, covered]) => {
  const rest = covered ? ["", "", "", "", ""] : [0, ready, "0.20/s", "0.00/s", "0.00/s"];
  return `<tr><td class="name">${a}<br>${b}</td>
  <td>rabbit@node${node}<span class="tag">+2</span></td>
  <td>classic</td>
  <td class="features"><span class="tag exp">Exp</span><span class="tag ha">ha-all</span></td>
  <td class="state"><i></i><span>idle</span></td>
  ${[ready, ...rest].map(v => `<td class="n">${v}</td>`).join("")}</tr>`;
}).join("");
```
